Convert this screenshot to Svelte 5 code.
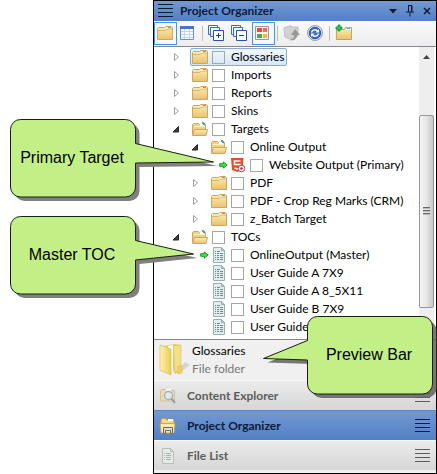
<script>
  const nodes = [
    { name: 'Glossaries', depth: 0, icon: 'folder', twisty: 'closed', selected: true },
    { name: 'Imports', depth: 0, icon: 'folder', twisty: 'closed' },
    { name: 'Reports', depth: 0, icon: 'folder', twisty: 'closed' },
    { name: 'Skins', depth: 0, icon: 'folder', twisty: 'closed' },
    { name: 'Targets', depth: 0, icon: 'open', twisty: 'open' },
    { name: 'Online Output', depth: 1, icon: 'open', twisty: 'open' },
    { name: 'Website Output (Primary)', depth: 2, icon: 'html', primary: true },
    { name: 'PDF', depth: 1, icon: 'folder', twisty: 'closed' },
    { name: 'PDF - Crop Reg Marks (CRM)', depth: 1, icon: 'folder', twisty: 'closed' },
    { name: 'z_Batch Target', depth: 1, icon: 'folder', twisty: 'closed' },
    { name: 'TOCs', depth: 0, icon: 'open', twisty: 'open' },
    { name: 'OnlineOutput (Master)', depth: 1, icon: 'toc', primary: true },
    { name: 'User Guide A 7X9', depth: 1, icon: 'toc' },
    { name: 'User Guide A 8_5X11', depth: 1, icon: 'toc' },
    { name: 'User Guide B 7X9', depth: 1, icon: 'toc' },
    { name: 'User Guide B 8_5X11', depth: 1, icon: 'toc' }
  ];
  const tools = [
    { id: 'folder', label: 'Show Files', on: true },
    { id: 'table', label: 'Show Details' },
    { id: 'sep' },
    { id: 'expand', label: 'Expand All' },
    { id: 'collapse', label: 'Collapse All' },
    { id: 'tiles', label: 'Preview Bar', on: true },
    { id: 'sep' },
    { id: 'go', label: 'Open', disabled: true },
    { id: 'refresh', label: 'Refresh' },
    { id: 'sep' },
    { id: 'new', label: 'New Folder' }
  ];
  const bars = [
    { id: 'content', label: 'Content Explorer' },
    { id: 'project', label: 'Project Organizer', active: true },
    { id: 'files', label: 'File List' }
  ];
</script>

{#snippet icon(kind)}
  {#if kind === 'folder'}
    <svg width="18" height="16" viewBox="0 0 18 16" aria-hidden="true">
      <path d="M1.500 14.500V3.500l1-1h6l1-1h6l1 1v12z" fill="url(#fg)" stroke="#cfa65a" />
      <path d="M10 3h5v1h-5z" fill="#fff" /><path d="M12 2h3v1h-3z" fill="#35b6e8" />
      <path d="M2 5.500h7l1.500-1.500h5.500" fill="none" stroke="#d8b468" />
    </svg>
  {:else if kind === 'open'}
    <svg width="18" height="16" viewBox="0 0 18 16" aria-hidden="true">
      <path d="M1.500 13.500V3.500l1-1h5l1 1h6v10z" fill="#efd28a" stroke="#cfa65a" />
      <path d="M9 2l4-1v4H9z" fill="#fff" /><path d="M11 1h2v2h-2z" fill="#42c96a" /><path d="M12 2h2v2h-2z" fill="#309de8" />
      <path d="M3.500 8.500h13l-1.500 6H1.500z" fill="url(#fg)" stroke="#cfa65a" />
      <path d="M3 5.500h11" stroke="#fff1bf" />
    </svg>
  {:else if kind === 'html'}
    <svg width="18" height="16" viewBox="0 0 18 16" aria-hidden="true">
      <path d="M2 1h12.500l-1 11.500-5 2.500-5.500-2z" fill="#e44d26" />
      <path d="M11.500 4H5.500v3.500h5.500l-.5 3.500-2.500 1-2.500-1" fill="none" stroke="#fff" stroke-width="1.600" />
      <circle cx="12.500" cy="11.500" r="3.300" fill="#fff" stroke="#c4394a" />
      <circle cx="12.500" cy="11.500" r="1.300" fill="#c81c38" />
    </svg>
  {:else if kind === 'toc'}
    <svg width="18" height="16" viewBox="0 0 18 16" aria-hidden="true">
      <path d="M3.500.5h8l3 3v12h-11z" fill="#e2eeee" stroke="#96b0b3" />
      <path d="M11.500.5v3h3z" fill="#b9cdcf" stroke="#96b0b3" />
      <path d="M5 4.500h1m1 0h3M5 6.500h1m1 0h2m1 0h3M5 8.500h1m1 0h2m1 0h3M5 10.500h1m1 0h2m1 0h3M5 12.500h1m1 0h2m1 0h3" stroke="#6f8b8d" />
    </svg>
  {:else if kind === 'arrow'}
    <svg width="9" height="8" viewBox="0 0 9 8" aria-hidden="true">
      <path d="M.7 2.700h3.600V.9L8.200 4 4.300 7.100V5.300H.7z" fill="#4be04b" stroke="#159a1b" />
    </svg>
  {:else if kind === 'table'}
    <svg width="16" height="16" viewBox="0 0 16 16" aria-hidden="true">
      <path d="M1.500 1.500h13v13h-13z" fill="#fafcff" stroke="#6b8cd6" />
      <path d="M1 1h14v3H1z" fill="#4a74cc" />
      <path d="M2 6.500h12M2 9.500h12M2 12.500h12M5.500 4v10M10.500 4v10" stroke="#c3d4f4" />
    </svg>
  {:else if kind === 'expand' || kind === 'collapse'}
    <svg width="16" height="16" viewBox="0 0 16 16" aria-hidden="true">
      <path d="M3 9.500H.5v-9h9V3M5 11.500H2.500v-9h9V5" fill="none" stroke="#4169c9" />
      <path d="M5.500 5.500h10v10h-10z" fill="#fff" stroke="#2450b8" />
      <path d={kind === 'expand' ? 'M8 10.500h5M10.500 8v5' : 'M8 10.500h5'} stroke="#163f9f" />
    </svg>
  {:else if kind === 'tiles'}
    <svg width="16" height="16" viewBox="0 0 16 16" aria-hidden="true">
      <path d="M1.500 1.500h13v13h-13z" fill="#f4f4f4" stroke="#999" />
      <path d="M3 3h5v4H3z" fill="#e24c3c" /><path d="M9 3h4v4H9z" fill="#ee6a5a" />
      <path d="M3 9h5v4H3z" fill="#4aa84e" /><path d="M9 9h4v4H9z" fill="#eebb3c" />
    </svg>
  {:else if kind === 'go'}
    <svg width="18" height="18" viewBox="0 0 18 18" aria-hidden="true">
      <path d="M1 4l5-2h2l1 1h6v9l-8 3-5-2z" fill="#d2d2d2" stroke="#c0c0c0" />
      <path d="M6 16c5-1 5-3 5-5H8l4-6 5 6h-3c0 4-3 6-8 5z" fill="#989898" />
    </svg>
  {:else if kind === 'refresh'}
    <svg width="18" height="18" viewBox="0 0 18 18" aria-hidden="true">
      <circle cx="9" cy="9" r="7.500" fill="#e0e2e8" stroke="#989fae" />
      <circle cx="9" cy="9" r="5.700" fill="#3f6ccb" stroke="#2850a5" />
      <path d="M5.500 8.500C6 5.500 10 5 11.500 7M12.500 9.500c-.5 3-4.500 3.500-6 1.500" fill="none" stroke="#fff" stroke-width="1.400" />
      <path d="M13 5v3.500H9.500zM5 13V9.500h3.500z" fill="#fff" />
    </svg>
  {:else if kind === 'new'}
    <svg width="18" height="18" viewBox="0 0 18 18" aria-hidden="true">
      <path d="M1.500 15.500v-10h8l1-2h6v12z" fill="url(#fg)" stroke="#c9a253" />
      <path d="M11 5.500h5" stroke="#fff" /><path d="M12 4.500h3" stroke="#35b6e8" />
      <path d="M3 1h2v2h2v2H5v2H3V5H1V3h2z" fill="#35c648" stroke="#148b2a" stroke-width=".8" />
    </svg>
  {:else if kind === 'content'}
    <svg width="18" height="18" viewBox="0 0 18 18" aria-hidden="true">
      <path d="M1.500 14V3.500l1-1h4l1 1h8V14z" fill="#ead9b5" stroke="#d4bf94" />
      <path d="M7 2h5v3H7z" fill="#f6f6f6" />
      <path d="M12 11l4 5" stroke="#989898" stroke-width="2" />
      <circle cx="9.500" cy="8.500" r="4" fill="#dfe8ef" stroke="#a5adb6" stroke-width="1.300" />
    </svg>
  {:else if kind === 'project'}
    <svg width="18" height="18" viewBox="0 0 18 18" aria-hidden="true">
      <path d="M2 12V3l1-1.500h4L8 3h7v9z" fill="#f6d98c" stroke="#c99c48" />
      <path d="M9 2h5v2H9z" fill="#fff" />
      <path d="M1 6.500h15l-1 9.500H2z" fill="#ffe9ab" stroke="#cda553" />
      <path d="M4.500 16.500v-6h9v6h-2v-3h-5v3z" fill="#dcdcdc" stroke="#696969" />
    </svg>
  {:else if kind === 'files'}
    <svg width="18" height="18" viewBox="0 0 18 18" aria-hidden="true">
      <path d="M3.500 1.500h8l3 3v12h-11z" fill="#e6ebe8" stroke="#b4bfba" />
      <path d="M11.500 1.500v3h3" fill="none" stroke="#b4bfba" />
      <path d="M5 6.500h1m1 0h5M5 8.500h1m1 0h5M5 10.500h1m1 0h5M5 12.500h1m1 0h5" stroke="#a8b4af" />
    </svg>
  {/if}
{/snippet}

{#snippet grip()}
  <svg width="15" height="14" viewBox="0 0 15 14" aria-hidden="true">
    <path d="M0 .5h15M0 4.500h15M0 8.500h15M0 12.500h15" stroke="currentColor" />
  </svg>
{/snippet}

<div class="stage">
  <svg class="defs" width="0" height="0" aria-hidden="true">
    <linearGradient id="fg" x1="0" y1="0" x2="0" y2="1">
      <stop offset="0" stop-color="#fdedb8" /><stop offset="1" stop-color="#e8c26c" />
    </linearGradient>
  </svg>

  <section class="panel">
    <header>
      {@render grip()}
      <h1>Project Organizer</h1>
      <button aria-label="Menu"><svg width="10" height="14" viewBox="0 0 10 14"><path d="M1 5h8L5 9.500z" fill="#0b1b38" /></svg></button>
      <button aria-label="Pin"><svg width="10" height="14" viewBox="0 0 10 14"><path d="M3 1.500h4v6M3.500 1v7M1 8h8M5 8v4.500M6.500 1.500v6" fill="none" stroke="#0b1b38" /></svg></button>
      <button aria-label="Close"><svg width="10" height="14" viewBox="0 0 10 14"><path d="M2 4l6 6M8 4l-6 6" stroke="#0b1b38" stroke-width="1.500" /></svg></button>
    </header>

    <div class="tools" role="toolbar" aria-label="Project tools">
      {#each tools as t}
        {#if t.id === 'sep'}
          <span class="sep"></span>
        {:else}
          <button class:on={t.on} disabled={t.disabled} aria-label={t.label}>{@render icon(t.id)}</button>
        {/if}
      {/each}
    </div>

    <div class="tree">
      <ul>
        {#each nodes as n, i}
          <li class="d{n.depth}">
            <span class="lead">
              {#if n.twisty}
                <button class="twisty" aria-label="Toggle {n.name}" aria-expanded={n.twisty === 'open'}>
                  <svg width="8" height="10" viewBox="0 0 8 10">
                    {#if n.twisty === 'open'}
                      <path d="M6.500 2.500V8H1z" fill="#404040" stroke="#262626" />
                    {:else}
                      <path d="M2.500 1.500v7L6.500 5z" fill="#fff" stroke="#a0a0a0" />
                    {/if}
                  </svg>
                </button>
              {:else if n.primary}
                <span class="mark">{@render icon('arrow')}</span>
              {/if}
            </span>
            <span class="item" class:selected={n.selected}>
              {@render icon(n.icon)}
              <input type="checkbox" id="n{i}" />
              <label for="n{i}">{n.name}</label>
            </span>
          </li>
        {/each}
      </ul>
      <div class="scroll" aria-hidden="true">
        <svg width="9" height="6" viewBox="0 0 9 6"><path d="M1 5l3.500-4L8 5z" fill="#444" /></svg>
        <div class="thumb">
          <svg width="7" height="9" viewBox="0 0 7 9"><path d="M0 .5h7M0 3.500h7M0 6.500h7" stroke="#666" /><path d="M0 1.500h7M0 4.500h7M0 7.500h7" stroke="#bbb" /></svg>
        </div>
      </div>
    </div>

    <div class="preview">
      <svg width="34" height="34" viewBox="0 0 34 34" aria-hidden="true">
        <defs>
          <linearGradient id="pf"><stop offset="0" stop-color="#fff3b0" /><stop offset="1" stop-color="#eccb58" /></linearGradient>
        </defs>
        <path d="M20 31l12-9-5-3-7 8z" fill="#c8c8c8" opacity=".7" />
        <path d="M5 3l12-2 6 1v26l-6 3z" fill="#e9cc66" />
        <path d="M15 3l8-1v24l-6 3z" fill="#f4df87" stroke="#dfbe58" stroke-width=".6" />
        <path d="M10 3l5-1v24l-3 1z" fill="#fffef5" />
        <path d="M2 2l11 4v26L2 27z" fill="url(#pf)" stroke="#dfbd55" stroke-width=".7" />
        <path d="M20 23h4v7l-4 1z" fill="#f0d264" stroke="#dcb94a" stroke-width=".6" />
      </svg>
      <div>
        <p>Glossaries</p>
        <p class="kind">File folder</p>
      </div>
    </div>

    <nav>
      {#each bars as b}
        <button class:active={b.active}>
          {@render icon(b.id)}
          <span>{b.label}</span>
          {@render grip()}
        </button>
      {/each}
    </nav>
  </section>

  <div class="callout primary">
    <svg width="210" height="86" viewBox="0 0 210 86" aria-hidden="true">
      <path transform="translate(4 4)" fill="#808080" d="M10.500.5h105a10 10 0 0 1 10 10v14l78 18.500-78 1v24a10 10 0 0 1-10 10h-105a10 10 0 0 1-10-10v-57.500a10 10 0 0 1 10-10z" />
      <path fill="#c3ef87" stroke="#182010" d="M10.500.5h105a10 10 0 0 1 10 10v14l78 18.500-78 1v24a10 10 0 0 1-10 10h-105a10 10 0 0 1-10-10v-57.500a10 10 0 0 1 10-10z" />
    </svg>
    <span>Primary Target</span>
  </div>
  <div class="callout master">
    <svg width="210" height="86" viewBox="0 0 210 86" aria-hidden="true">
      <path transform="translate(4 4)" fill="#808080" d="M10.500.5h105a10 10 0 0 1 10 10v14l58 13.500-58 6v24a10 10 0 0 1-10 10h-105a10 10 0 0 1-10-10v-57.500a10 10 0 0 1 10-10z" />
      <path fill="#c3ef87" stroke="#182010" d="M10.500.5h105a10 10 0 0 1 10 10v14l58 13.500-58 6v24a10 10 0 0 1-10 10h-105a10 10 0 0 1-10-10v-57.500a10 10 0 0 1 10-10z" />
    </svg>
    <span>Master TOC</span>
  </div>
  <div class="callout bar">
    <svg width="176" height="86" viewBox="-45 0 176 86" aria-hidden="true">
      <path transform="translate(4 4)" fill="#606060" fill-opacity=".85" d="M10.500.5h105a10 10 0 0 1 10 10v57.500a10 10 0 0 1-10 10h-105a10 10 0 0 1-10-10v-24l-44-1.500 44-18v-14a10 10 0 0 1 10-10z" />
      <path fill="#c3ef87" stroke="#182010" d="M10.500.5h105a10 10 0 0 1 10 10v57.500a10 10 0 0 1-10 10h-105a10 10 0 0 1-10-10v-24l-44-1.500 44-18v-14a10 10 0 0 1 10-10z" />
    </svg>
    <span>Preview Bar</span>
  </div>
</div>

<style>
  :global(body) { margin: 0; background: #fff; }
  .stage {
    position: relative;
    padding-left: 153px;
    overflow: hidden;
    font: 12px/18px Lato, "Open Sans", sans-serif;
    color: #000;
  }
  .defs { position: absolute; }
  svg { display: block; flex: none; }
  button {
    display: flex;
    align-items: center;
    justify-content: center;
    box-sizing: border-box;
    padding: 0;
    border: 0;
    background: none;
    font: inherit;
    color: inherit;
  }
  .panel { border: 1px solid #000; background: #f0f0f0; }
  header {
    display: flex;
    align-items: center;
    gap: 7px;
    height: 20px;
    padding: 0 4px;
    background: linear-gradient(#7598d2, #5180c4);
    color: #0b1b38;
  }
  h1 { flex: 1; margin: 0; font-size: 12px; line-height: 18px; font-weight: 700; color: #0b1b38; }
  .tools {
    display: flex;
    align-items: center;
    height: 25px;
    background: linear-gradient(#fafafa, #ededed);
    border-bottom: 1px solid #828790;
  }
  .tools button { justify-content: flex-start; width: 23px; height: 23px; border: 1px solid transparent; padding: 0 0 1px 1px; }
  .tools .on { border-color: #3c97ee; background: #f3f8fd; }
  .sep { width: 1px; height: 15px; margin: 0 3px 0 2px; background: #bdbdbd; }
  .tree { display: flex; background: #fff; border-bottom: 1px solid #828790; }
  ul { flex: 1; min-width: 0; margin: 0; padding: 1px 0 3px; list-style: none; }
  li { display: flex; height: 18px; white-space: nowrap; }
  .d0 { padding-left: 18px; }
  .d1 { padding-left: 37px; }
  .d2 { padding-left: 56px; }
  .lead { display: flex; align-items: center; width: 18px; }
  .mark { margin-left: auto; }
  .item { display: flex; align-items: center; border: 1px solid transparent; border-radius: 2px; padding-right: 2px; }
  .selected { border-color: #84acdd; background: linear-gradient(#f2f8fe, #d5e6fb); }
  input {
    appearance: none;
    box-sizing: border-box;
    width: 13px;
    height: 13px;
    margin: 0 6px 0 3px;
    border: 1px solid #a6a6a6;
    background: transparent;
  }
  .scroll {
    display: flex;
    flex-direction: column;
    align-items: center;
    width: 15px;
    margin-right: 2px;
    padding: 7px 0 31px;
    box-sizing: border-box;
    background: #eee;
  }
  .thumb {
    flex: 1;
    display: flex;
    align-items: center;
    justify-content: center;
    width: 13px;
    margin-top: 55px;
    border: 1px solid #979797;
    border-radius: 2px;
    background: linear-gradient(90deg, #f5f5f5, #e6e6e8 50%, #c8c8cc);
  }
  .preview { display: flex; align-items: center; height: 40px; padding-left: 4px; background: #f0f0f0; }
  p { margin: 0; }
  .kind { color: #777; }
  nav { padding-bottom: 3px; }
  nav button {
    width: 100%;
    height: 30px;
    gap: 10px;
    padding: 0 6px 0 5px;
    background: linear-gradient(#ebebeb, #d6d6d6);
    border-top: 1px solid #f8f8f8;
    color: #5c5c5c;
    font-weight: 700;
    text-align: left;
  }
  nav span { flex: 1; }
  nav .active { background: linear-gradient(#7598d2, #5180c4); border-top-color: #5c86c7; color: #0b1b38; }
  .callout { position: absolute; font: 16px/18px "Liberation Sans", Arial, sans-serif; }
  .callout span { position: absolute; top: 30px; left: 0; width: 124px; text-align: center; }
  .primary { left: 10px; top: 119px; }
  .master { left: 10px; top: 216px; }
  .bar { right: -1px; top: 316px; }
  .bar span { left: 45px; }
</style>
